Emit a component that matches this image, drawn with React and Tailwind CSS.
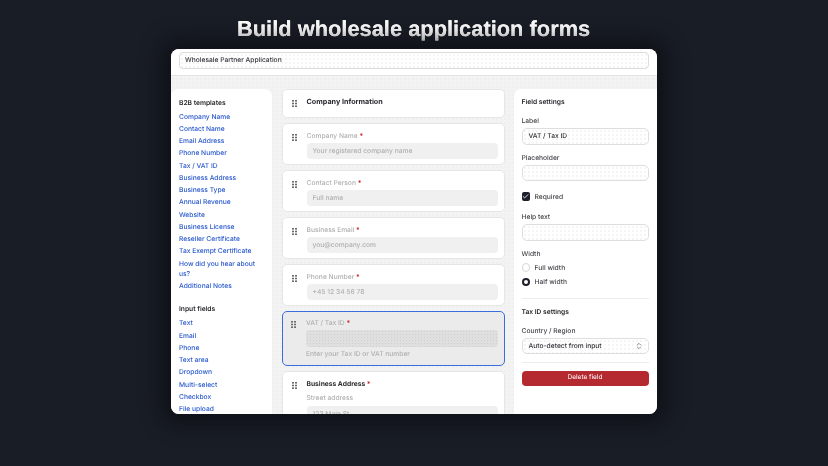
import { ChevronsUpDown, Check } from 'lucide-react';

const templates = ['Company Name', 'Contact Name', 'Email Address', 'Phone Number', 'Tax / VAT ID', 'Business Address', 'Business Type', 'Annual Revenue', 'Website', 'Business License', 'Reseller Certificate', 'Tax Exempt Certificate', 'How did you hear about us?', 'Additional Notes'];
const inputs = ['Text', 'Email', 'Phone', 'Text area', 'Dropdown', 'Multi-select', 'Checkbox', 'File upload'];
const fields = [
  { label: 'Company Name', placeholder: 'Your registered company name' },
  { label: 'Contact Person', placeholder: 'Full name' },
  { label: 'Business Email', placeholder: 'you@company.com' },
  { label: 'Phone Number', placeholder: '+45 12 34 56 78' },
];
const dots = 'bg-[radial-gradient(#f5f5f5_0.8px,transparent_0.9px)] bg-[length:4px_4px]';

function Grip() {
  return (
    <svg width="5" height="7" viewBox="0 0 5 7" className="mt-[4px] shrink-0 fill-[#6b6b70]">
      <rect x="0" y="0" width="2" height="1.6" />
      <rect x="3" y="0" width="2" height="1.6" />
      <rect x="0" y="2.7" width="2" height="1.6" />
      <rect x="3" y="2.7" width="2" height="1.6" />
      <rect x="0" y="5.4" width="2" height="1.6" />
      <rect x="3" y="5.4" width="2" height="1.6" />
    </svg>
  );
}

function Card({ children, className = '' }) {
  return (
    <div className={`flex shrink-0 gap-[10px] rounded-[5px] border border-[#e6e6e6] bg-white pl-[9px] pr-[6px] pt-[7px] ${className}`}>
      <div className="-mt-[1px] shrink-0"><Grip /></div>
      <div className="min-w-0 flex-1">{children}</div>
    </div>
  );
}

function SideInput({ value, children }) {
  return (
    <div className={`flex h-[16.5px] items-center justify-between rounded-[5px] border border-[#dedede] bg-white pl-[6px] pr-[5px] text-[6.7px] font-medium text-[#303036] ${dots}`}>
      <span>{value}</span>
      {children}
    </div>
  );
}

export default function App() {
  return (
    <div className="flex h-[466px] w-[828px] flex-col items-center overflow-hidden bg-[#191d26] font-['Inter',sans-serif] [text-rendering:geometricPrecision]">
      <h1 className="mt-[15px] h-[27px] font-['Liberation_Sans',sans-serif] text-[21.85px] font-bold leading-[27px] text-white [text-shadow:0_0_0.6px_#fff] [will-change:transform]">Build wholesale application forms</h1>
      <div className="mt-[7px] flex h-[365px] w-[486px] flex-col overflow-hidden rounded-[8px] bg-[#f3f3f3] bg-[radial-gradient(#efefef_0.8px,transparent_0.9px)] bg-[length:4px_4px] shadow-[0_0_20px_10px_rgba(8,10,14,0.6)] [will-change:transform]">
        <div className="h-[27px] shrink-0 border-b border-[#e4e4e4] bg-white px-[8px] pt-[3px]">
          <div className={`flex h-[16.5px] items-center rounded-[4px] border border-[#dcdcdc] bg-white px-[5px] text-[6.7px] font-medium text-[#33333a] ${dots}`}>Wholesale Partner Application</div>
        </div>

        <div className="flex min-h-0 flex-1 gap-[9.5px] pt-[13px]">
          <aside className="w-[101px] shrink-0 rounded-t-[7px] bg-white pl-[8px] pr-[12px] pt-[8.5px] text-[6.7px] font-medium leading-[10.5px]">
            <div className="mb-[3.5px] font-semibold text-[#27272c]">B2B templates</div>
            <div className="flex flex-col gap-[1.75px]">
              {templates.map((t) => (
                <div key={t} className="text-[#2858cc]">{t}</div>
              ))}
            </div>
            <div className="mb-[3.5px] mt-[12.5px] font-semibold text-[#27272c]">Input fields</div>
            <div className="flex flex-col gap-[1.75px]">
              {inputs.map((t) => (
                <div key={t} className="text-[#2858cc]">{t}</div>
              ))}
            </div>
          </aside>

          <main className="flex w-[223px] shrink-0 flex-col gap-[4.5px] overflow-hidden">
            <Card className="h-[29px]">
              <div className="-mt-[1px] text-[7.2px] font-bold leading-[11px] text-[#2c2c32]">Company Information</div>
            </Card>
            {fields.map((f) => (
              <Card key={f.label} className="h-[42.5px]">
                <div className="text-[6.7px] font-medium leading-[11px] text-[#b0b0b0]">{f.label} <span className="font-bold text-[#c8242c]">*</span></div>
                <div className="mt-[1px] flex h-[16.5px] items-center rounded-[4px] bg-[#f0f0f0] px-[6px] text-[6.7px] font-medium text-[#b0b0b0]">{f.placeholder}</div>
              </Card>
            ))}
            <div className="flex h-[55.5px] shrink-0 gap-[10px] rounded-[5px] border-[1.5px] border-[#3b6ddc] bg-[#ebebeb] pl-[8.5px] pr-[5.5px] pt-[6.5px]">
              <div className="-mt-[1px] shrink-0"><Grip /></div>
              <div className="min-w-0 flex-1">
                <div className="text-[6.7px] font-medium leading-[11px] text-[#b0b0b0]">VAT / Tax ID <span className="font-bold text-[#c8242c]">*</span></div>
                <div className="mt-[1px] h-[16.5px] rounded-[4px] bg-[#dfdfdf] bg-[radial-gradient(#cfcfcf_0.6px,transparent_0.7px)] bg-[length:3px_3px]" />
                <div className="mt-[2px] text-[6.7px] font-medium leading-[11px] text-[#b0b0b0]">Enter your Tax ID or VAT number</div>
              </div>
            </div>
            <Card className="h-[60px]">
              <div className="text-[6.7px] font-bold leading-[11px] text-[#303036]">Business Address <span className="font-bold text-[#c8242c]">*</span></div>
              <div className="mt-[3px] text-[6.7px] font-medium leading-[11px] text-[#b0b0b0]">Street address</div>
              <div className="mt-[2px] flex h-[16.5px] items-center rounded-[4px] bg-[#f0f0f0] px-[6px] text-[6.7px] font-medium text-[#b0b0b0]">123 Main St</div>
            </Card>
          </main>

          <aside className="flex-1 rounded-tl-[7px] bg-white pl-[7.5px] pr-[8.5px] pt-[8px] text-[6.7px] font-medium text-[#45454b]">
            <div className="font-semibold leading-[10px] text-[#27272c]">Field settings</div>
            <div className="mb-[2px] mt-[9px] leading-[10px]">Label</div>
            <SideInput value="VAT / Tax ID" />
            <div className="mb-[2px] mt-[8px] leading-[10px]">Placeholder</div>
            <SideInput value="" />
            <div className="mt-[10.5px] flex items-center gap-[4.5px] leading-[10px]">
              <span className="flex h-[8.5px] w-[8.5px] items-center justify-center rounded-[2px] bg-[#1d1f2b]"><Check size={7} strokeWidth={3} className="text-white" /></span>
              Required
            </div>
            <div className="mb-[2px] mt-[10.5px] leading-[10px]">Help text</div>
            <SideInput value="" />
            <div className="mt-[8px] leading-[10px]">Width</div>
            <div className="mt-[4px] flex items-center gap-[4.5px] leading-[10px]">
              <span className="h-[8.5px] w-[8.5px] rounded-full border border-[#d5d5d5]" />
              Full width
            </div>
            <div className="mt-[4.5px] flex items-center gap-[4.5px] leading-[10px]">
              <span className="h-[8.5px] w-[8.5px] rounded-full border-[2.5px] border-[#1d1f2b]" />
              Half width
            </div>
            <div className="mt-[10.5px] border-t border-[#ececec]" />
            <div className="mt-[8.5px] font-semibold leading-[10px] text-[#27272c]">Tax ID settings</div>
            <div className="mb-[2px] mt-[8.5px] leading-[10px]">Country / Region</div>
            <SideInput value="Auto-detect from input">
              <ChevronsUpDown size={8} className="text-[#55555a]" />
            </SideInput>
            <div className="mt-[8px] border-t border-[#ececec]" />
            <div className="mt-[7.5px] flex h-[15px] items-center justify-center rounded-[4px] bg-[#b52a30] text-[6.5px] font-normal text-white">Delete field</div>
          </aside>
        </div>
      </div>
    </div>
  );
}
